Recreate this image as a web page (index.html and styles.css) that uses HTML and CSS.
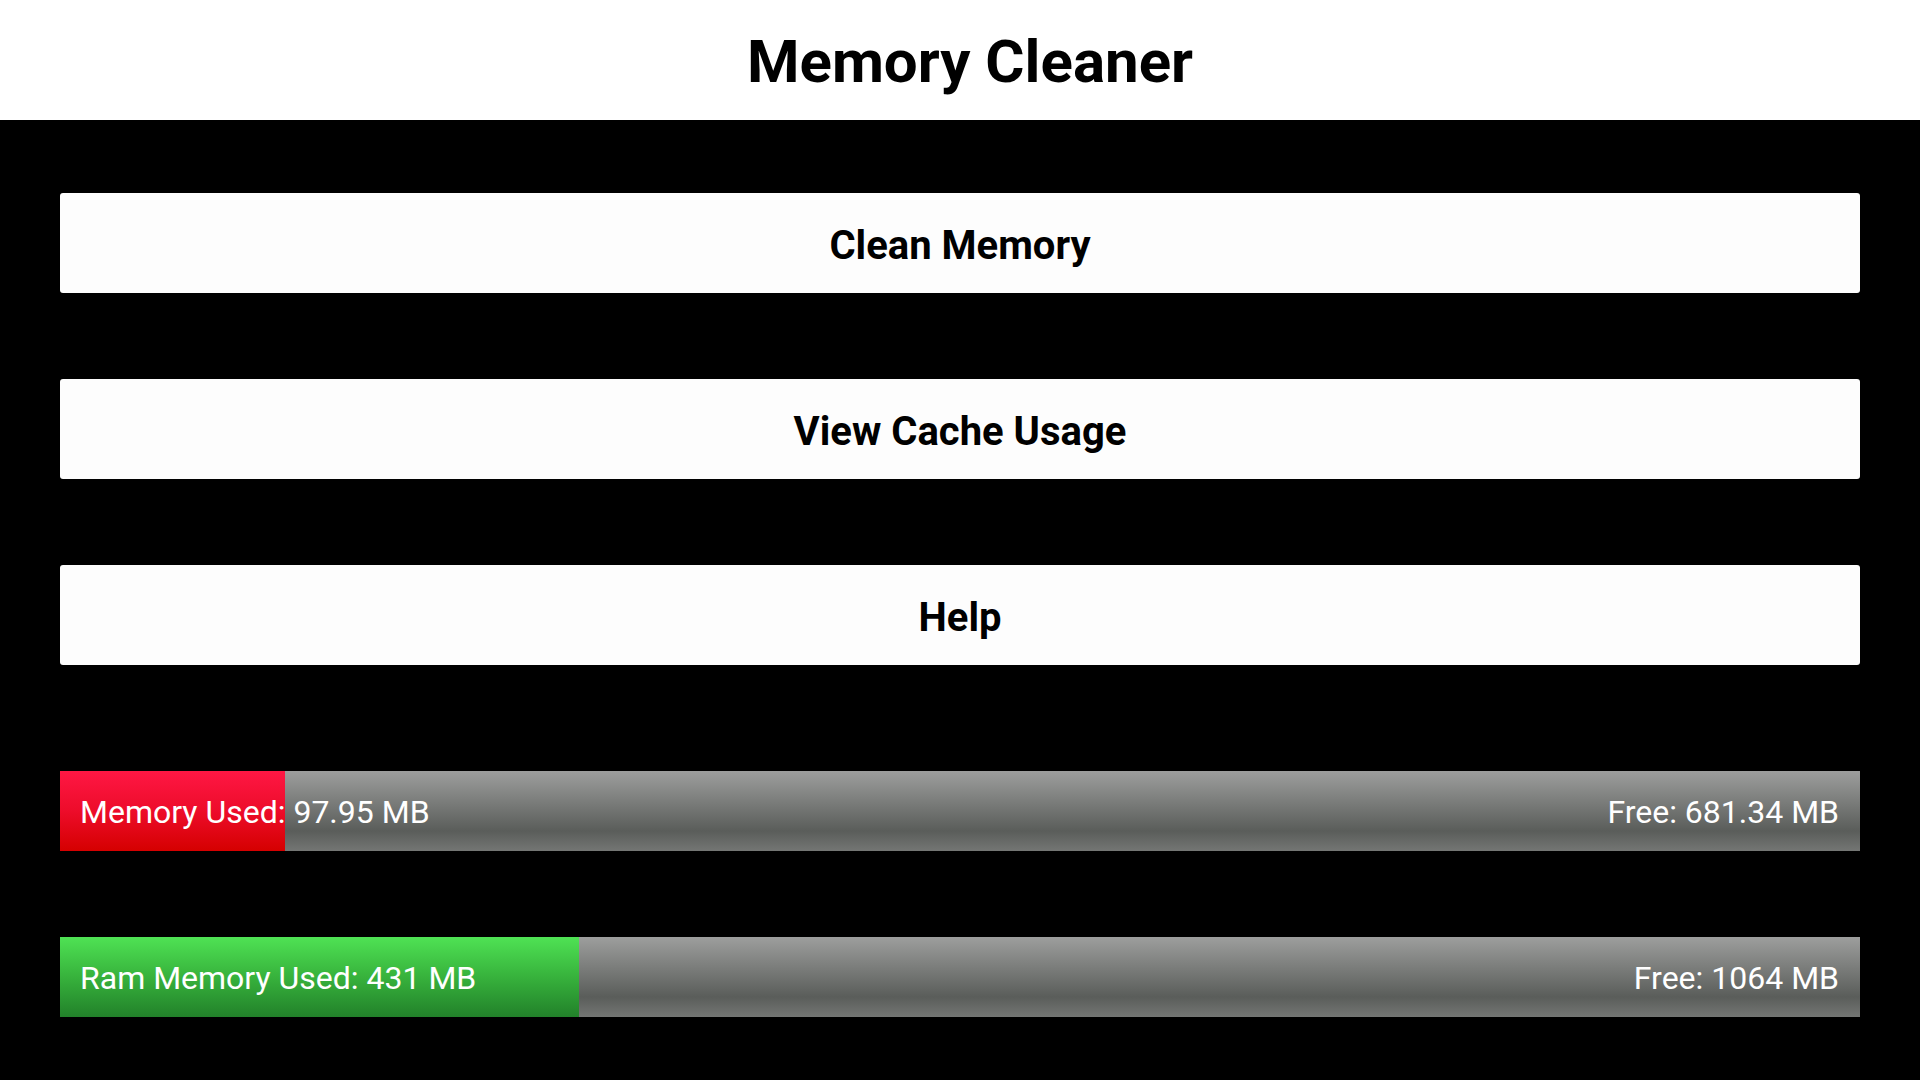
FILE: index.html
```html
<!DOCTYPE html>
<html lang="en">
<head>
<meta charset="UTF-8" />
<meta name="viewport" content="width=device-width, initial-scale=1" />
<title>Memory Cleaner</title>
<link rel="stylesheet" href="styles.css">
</head>
<body>
  <header class="topbar">
    <h1>Memory Cleaner</h1>
  </header>

  <main class="content">
    <div class="actions">
      <button class="action-btn">Clean Memory</button>
      <button class="action-btn">View Cache Usage</button>
      <button class="action-btn">Help</button>
    </div>

    <div class="meters">
      <div class="meter">
        <div class="meter-fill used-red" style="width: 12.5%"></div>
        <div class="meter-text">
          <span>Memory Used: 97.95 MB</span>
          <span>Free: 681.34 MB</span>
        </div>
      </div>
      <div class="meter">
        <div class="meter-fill used-green" style="width: 28.83%"></div>
        <div class="meter-text">
          <span>Ram Memory Used: 431 MB</span>
          <span>Free: 1064 MB</span>
        </div>
      </div>
    </div>
  </main>
</body>
</html>
```

FILE: styles.css
```css
html, body {
  height: 100%;
}
body {
  margin: 0;
  font-family: Roboto, "Liberation Sans", sans-serif;
  background: #000;
  color: #000;
}
.topbar {
  height: 120px;
  background: #fff;
  display: flex;
  align-items: center;
  justify-content: center;
}
.topbar h1 {
  margin: 0;
  font-size: 60px;
  font-weight: 700;
  line-height: 1;
  padding: 4px 0 0 20px;
}
.content {
  padding: 73px 60px 0;
}
.actions {
  display: flex;
  flex-direction: column;
  gap: 86px;
}
.action-btn {
  height: 100px;
  border: none;
  border-radius: 3px;
  background: #fdfdfd;
  color: #000;
  font-family: Roboto, "Liberation Sans", sans-serif;
  font-size: 40px;
  font-weight: 700;
  padding: 4px 0 0;
  cursor: pointer;
}
.meters {
  margin-top: 106px;
  display: flex;
  flex-direction: column;
  gap: 86px;
}
.meter {
  position: relative;
  height: 80px;
  background: linear-gradient(to bottom, #9d9e9d 0%, #5a5d5a 75%, #747674 100%);
  overflow: hidden;
}
.meter-fill {
  height: 100%;
}
.used-red {
  background: linear-gradient(to bottom, #ff1744 0%, #ed0c2a 50%, #d50000 100%);
}
.used-green {
  background: linear-gradient(to bottom, #4fe254 0%, #37b23c 50%, #22812a 100%);
}
.meter-text {
  position: absolute;
  inset: 0;
  display: flex;
  align-items: center;
  justify-content: space-between;
  padding: 2px 21px 0 20px;
  color: #fff;
  font-size: 32px;
}
```
